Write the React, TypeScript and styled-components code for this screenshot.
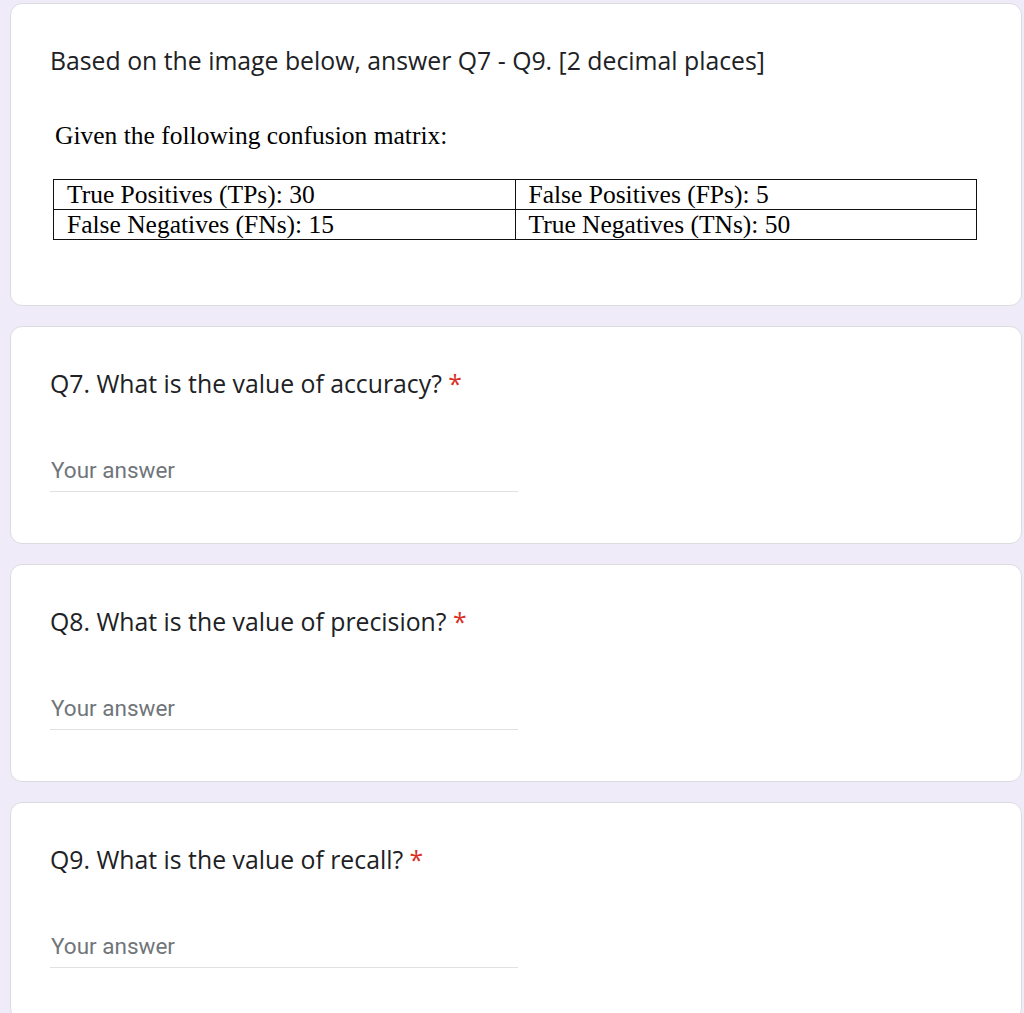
import styled, { createGlobalStyle } from "styled-components";

const GlobalStyle = createGlobalStyle`
  html, body {
    margin: 0;
    padding: 0;
    background: #f0ebf8;
  }
`;

const questions = [
  { id: "q7", title: "Q7. What is the value of accuracy?" },
  { id: "q8", title: "Q8. What is the value of precision?" },
  { id: "q9", title: "Q9. What is the value of recall?" },
];

export default function App() {
  return (
    <>
      <GlobalStyle />
      <Page>
        <Card>
          <Heading>Based on the image below, answer Q7 - Q9. [2 decimal places]</Heading>
          <Figure>
            <Caption>Given the following confusion matrix:</Caption>
            <Matrix>
              <tbody>
                <tr>
                  <Cell>True Positives (TPs): 30</Cell>
                  <Cell>False Positives (FPs): 5</Cell>
                </tr>
                <tr>
                  <Cell>False Negatives (FNs): 15</Cell>
                  <Cell>True Negatives (TNs): 50</Cell>
                </tr>
              </tbody>
            </Matrix>
          </Figure>
        </Card>
        {questions.map((q) => (
          <Card key={q.id} $question>
            <Heading>
              {q.title} <Required>*</Required>
            </Heading>
            <Answer placeholder="Your answer" />
          </Card>
        ))}
      </Page>
    </>
  );
}

const Page = styled.div`
  display: flex;
  flex-direction: column;
  gap: 20px;
  padding: 3px 0 0 10px;
  width: 1012px;
  height: 1010px;
  overflow: hidden;
`;

const Card = styled.div<{ $question?: boolean }>`
  display: flex;
  flex-direction: column;
  align-items: flex-start;
  flex-shrink: 0;
  box-sizing: border-box;
  background: #fff;
  border: 1px solid #dadce0;
  border-radius: 12px;
  padding: 38px 39px ${(p) => (p.$question ? "51px" : "0")};
  height: ${(p) => (p.$question ? "218px" : "303px")};
`;

const Heading = styled.div`
  font-family: "Open Sans", "Liberation Sans", sans-serif;
  font-size: 24.8px;
  line-height: 36px;
  color: #202124;
  white-space: nowrap;
`;

const Required = styled.span`
  color: #d93025;
`;

const Figure = styled.div`
  display: flex;
  flex-direction: column;
  margin-top: 43px;
  padding-left: 3px;
`;

const Caption = styled.div`
  font-family: "Liberation Serif", "Times New Roman", serif;
  font-size: 25.5px;
  line-height: 30px;
  color: #000;
  padding-left: 2px;
`;

const Matrix = styled.table`
  margin-top: 28px;
  width: 924px;
  border-collapse: collapse;
  table-layout: fixed;
`;

const Cell = styled.td`
  border: 1.5px solid #111;
  padding: 1px 0 0 13px;
  height: 30px;
  box-sizing: border-box;
  font-family: "Liberation Serif", "Times New Roman", serif;
  font-size: 25.5px;
  line-height: 28px;
  color: #000;
  white-space: nowrap;
  vertical-align: middle;
`;

const Answer = styled.input`
  margin-top: 57px;
  width: 468px;
  box-sizing: border-box;
  border: 0;
  border-bottom: 1px solid #e0e0e0;
  padding: 0 0 9px 1px;
  outline: none;
  background: transparent;
  font-family: Roboto, "Liberation Sans", sans-serif;
  font-size: 22.5px;
  line-height: 24px;
  color: #202124;

  &::placeholder {
    color: #70757a;
  }
`;
